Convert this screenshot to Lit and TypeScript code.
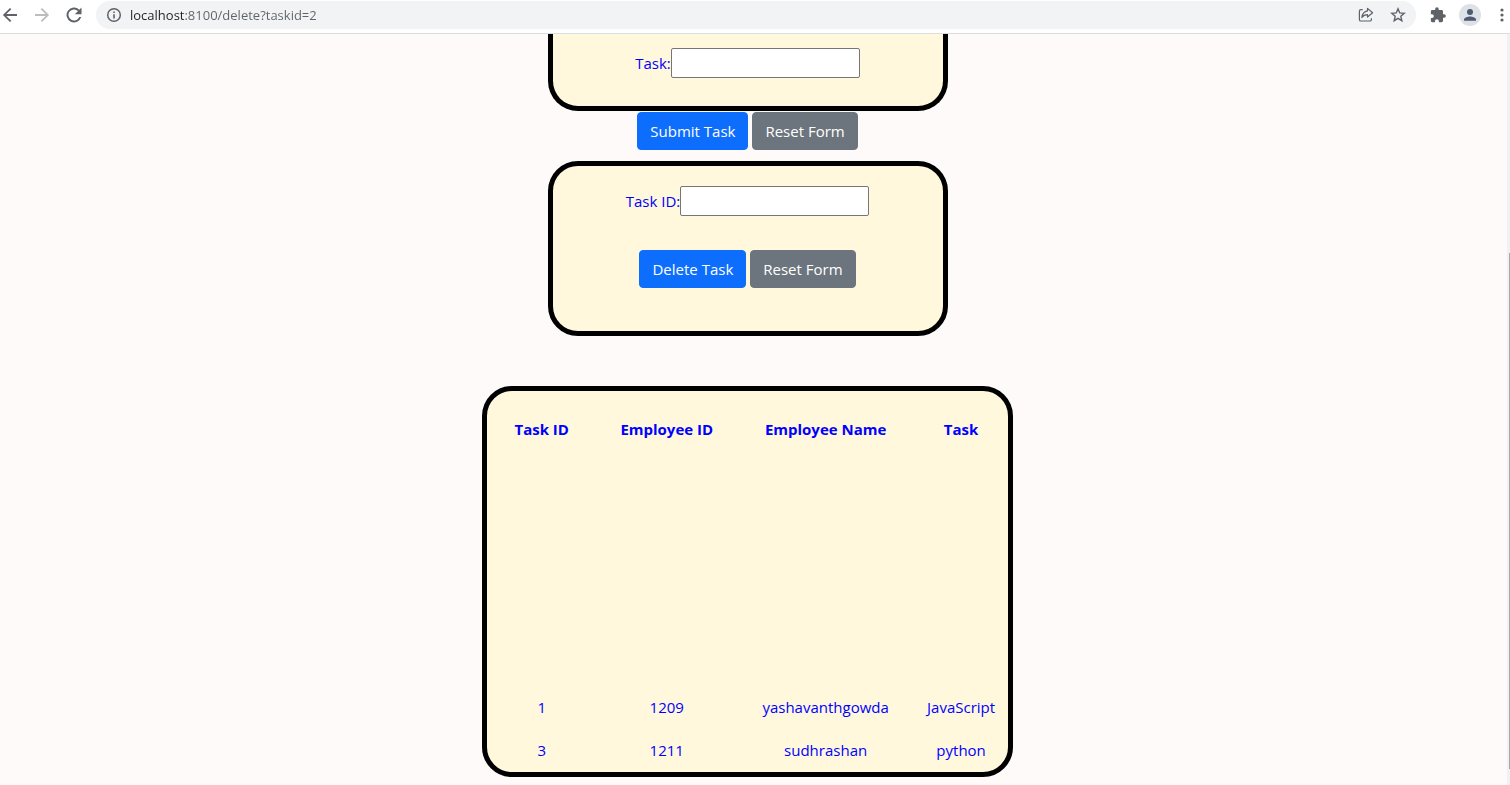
import { LitElement, html, css } from "lit";
import { customElement, property } from "lit/decorators.js";

interface Assignment {
  id: number;
  employeeId: number;
  name: string;
  task: string;
}

@customElement("browser-bar")
class BrowserBar extends LitElement {
  @property() url = "";

  static styles = css`
    :host {
      display: block;
      background: #fff;
      border-bottom: 1px solid #dadce0;
      color: #5f6368;
    }
    .bar {
      display: flex;
      align-items: center;
      height: 33px;
      padding-bottom: 3px;
      box-sizing: border-box;
    }
    .icon {
      display: flex;
      flex: none;
      padding: 0;
      border: 0;
      background: none;
      color: inherit;
      cursor: pointer;
    }
    .icon:disabled {
      color: #bbbdbf;
    }
    svg {
      display: block;
      fill: currentColor;
    }
    .nav {
      display: flex;
      gap: 12px;
      margin-right: 12px;
    }
    .address {
      display: flex;
      flex: 1;
      align-items: center;
      height: 28px;
      padding: 0 8px;
      border-radius: 14px;
      background: #f1f3f4;
    }
    .url {
      flex: 1;
      min-width: 0;
      height: 24px;
      margin: 0 12px 0 6px;
      padding: 0;
      border: 0;
      outline: 0;
      font: 13px/24px "Open Sans", "Noto Sans", sans-serif;
      color: #5f6368;
      background: linear-gradient(90deg, #202124 55px, #5f6368 55px);
      -webkit-background-clip: text;
      background-clip: text;
      -webkit-text-fill-color: transparent;
    }
    .actions {
      display: flex;
      gap: 12px;
    }
    .tools {
      display: flex;
      align-items: center;
      gap: 11px;
      margin-left: 12px;
    }
  `;

  render() {
    return html`
      <div class="bar">
        <div class="nav">
          <button class="icon" aria-label="Back">
            <svg width="20" height="20" viewBox="0 0 20 20"><path d="M17 9.100V10.900H6.400l4.900 4.900L10 17.100 2.900 10 10 2.900l1.300 1.300L6.400 9.100z" /></svg>
          </button>
          <button class="icon" aria-label="Forward" disabled>
            <svg width="20" height="20" viewBox="0 0 20 20"><path d="M3 9.100V10.900H13.600l-4.900 4.900L10 17.100 17.100 10 10 2.900 8.700 4.200l4.900 4.900z" /></svg>
          </button>
          <button class="icon" aria-label="Reload">
            <svg width="20" height="20" viewBox="0 0 24 24"><path d="M18.400 5.600A9 9 0 1 0 20.700 14.500H18.300A6.700 6.700 0 1 1 16.800 7.200L13 11H21V3z" /></svg>
          </button>
        </div>
        <div class="address">
          <svg width="20" height="20" viewBox="0 0 20 20" aria-hidden="true">
            <circle cx="10" cy="10" r="6.300" fill="none" stroke="currentColor" stroke-width="1.500" />
            <path d="M9.200 9.200h1.600V13.500H9.200zM9.200 6.500h1.600v1.600H9.200z" />
          </svg>
          <input class="url" type="text" aria-label="Address" spellcheck="false" .value=${this.url} />
          <div class="actions">
            <button class="icon" aria-label="Share">
              <svg width="20" height="20" viewBox="0 0 20 20">
                <path
                  d="M6.700 4.600H5a1.600 1.600 0 0 0-1.600 1.600v8.200A1.600 1.600 0 0 0 5 16h8.800a1.600 1.600 0 0 0 1.600-1.600v-1.200M11.500 3.400l5.100 4.300-5.100 4.300V9.700c-2.600 0-4.300.8-5.600 2.800.4-3.400 2.200-6.100 5.600-6.600z"
                  fill="none"
                  stroke="currentColor"
                  stroke-width="1.200"
                  stroke-linejoin="round"
                />
              </svg>
            </button>
            <button class="icon" aria-label="Bookmark">
              <svg width="20" height="20" viewBox="0 0 20 20">
                <path
                  d="M10 3.800l1.750 4.150 4.450.4-3.400 2.950 1.050 4.400L10 13.350 6.150 15.700l1.050-4.400-3.400-2.950 4.450-.4z"
                  fill="none"
                  stroke="currentColor"
                  stroke-width="1.400"
                />
              </svg>
            </button>
          </div>
        </div>
        <div class="tools">
          <button class="icon" aria-label="Extensions">
            <svg width="20" height="20" viewBox="-2 -2 28 28"><path d="M20.500 11H19V7c0-1.100-.9-2-2-2h-4V3.500a2.500 2.500 0 0 0-5 0V5H4a2 2 0 0 0-2 2v3.800h1.500a2.700 2.700 0 0 1 0 5.400H2V20c0 1.100.9 2 2 2h3.800v-1.500a2.700 2.700 0 0 1 5.400 0V22H17c1.100 0 2-.9 2-2v-4h1.500a2.500 2.500 0 0 0 0-5z" /></svg>
          </button>
          <button class="icon" aria-label="Profile">
            <svg width="22" height="22" viewBox="0 0 22 22">
              <circle cx="11" cy="11" r="11" fill="#dee1e6" />
              <circle cx="11" cy="8" r="3" fill="#4e5a70" />
              <path d="M5 16.800v-1.300c0-2 4-3 6-3s6 1 6 3v1.300z" fill="#4e5a70" />
            </svg>
          </button>
          <button class="icon" aria-label="Menu">
            <svg width="18" height="20" viewBox="0 0 18 20">
              <circle cx="10" cy="5" r="1.600" />
              <circle cx="10" cy="10" r="1.600" />
              <circle cx="10" cy="15" r="1.600" />
            </svg>
          </button>
        </div>
      </div>
    `;
  }
}

@customElement("app-root")
class AppRoot extends LitElement {
  private rows: Assignment[] = [
    { id: 1, employeeId: 1209, name: "yashavanthgowda", task: "JavaScript" },
    { id: 3, employeeId: 1211, name: "sudhrashan", task: "python" },
  ];

  static styles = css`
    :host {
      display: flex;
      flex-direction: column;
      min-height: 100vh;
      font: 15px/24px "Open Sans", "Noto Sans", sans-serif;
      color: #0000ff;
      background: #fffafa;
    }
    .view {
      display: flex;
      flex: 1;
    }
    main {
      display: flex;
      flex: 1;
      flex-direction: column;
      align-items: center;
      padding: 0 12px 8px 0;
    }
    .card {
      box-sizing: border-box;
      width: 100%;
      max-width: 400px;
      border: 5px solid #000;
      border-radius: 30px;
      background: #fff8dc;
    }
    .form {
      display: flex;
      flex-direction: column;
      align-items: center;
    }
    .entry {
      width: 100%;
      max-width: 400px;
    }
    .continued {
      padding: 14px 0 28px;
      border-top: 0;
      border-top-left-radius: 0;
      border-top-right-radius: 0;
    }
    .remove {
      gap: 34px;
      margin: 11px 0 50px;
      padding: 20px 0 43px;
    }
    .field {
      display: flex;
      align-items: center;
      justify-content: center;
    }
    .field input {
      box-sizing: border-box;
      width: 189px;
      height: 30px;
      padding: 1px 2px;
      border: 1px solid #767676;
      border-radius: 2px;
      background: #fff;
      font: inherit;
      color: #000;
    }
    .buttons {
      display: flex;
      justify-content: center;
      gap: 4px;
    }
    .entry .buttons {
      margin-top: 1px;
    }
    .btn {
      padding: 6px 12px;
      border: 1px solid #0d6efd;
      border-radius: 4px;
      background: #0d6efd;
      color: #fff;
      font: inherit;
      cursor: pointer;
    }
    .reset {
      border-color: #6c757d;
      background: #6c757d;
    }
    .list {
      max-width: 531px;
    }
    table {
      width: 100%;
      table-layout: fixed;
      border-collapse: collapse;
      text-align: center;
    }
    .c-id {
      width: 21%;
    }
    .c-employee {
      width: 27%;
    }
    .c-name {
      width: 34%;
    }
    .c-task {
      width: 18%;
    }
    th {
      height: 269px;
      padding: 26px 0 0;
      vertical-align: top;
      font-weight: 700;
    }
    td {
      padding: 9px 0 10px;
    }
    .scrollbar {
      display: flex;
      flex-direction: column;
      width: 3px;
      background: #f1f1f1;
    }
    .before {
      flex: 219;
    }
    .thumb {
      flex: 516;
      margin-left: 2px;
      background: #a8a8a8;
    }
    .after {
      flex: 16;
    }
  `;

  render() {
    return html`
      <browser-bar url="localhost:8100/delete?taskid=2"></browser-bar>
      <div class="view">
        <main>
          <form class="entry" @submit=${(e: Event) => e.preventDefault()}>
            <div class="card continued">
              <div class="field">
                <label for="task">Task:</label><input id="task" type="text" />
              </div>
            </div>
            <div class="buttons">
              <button class="btn" type="submit">Submit Task</button>
              <button class="btn reset" type="reset">Reset Form</button>
            </div>
          </form>
          <form class="card form remove" @submit=${(e: Event) => e.preventDefault()}>
            <div class="field">
              <label for="task-id">Task ID:</label><input id="task-id" type="text" />
            </div>
            <div class="buttons">
              <button class="btn" type="submit">Delete Task</button>
              <button class="btn reset" type="reset">Reset Form</button>
            </div>
          </form>
          <section class="card list">
            <table>
              <colgroup>
                <col class="c-id" />
                <col class="c-employee" />
                <col class="c-name" />
                <col class="c-task" />
              </colgroup>
              <thead>
                <tr>
                  <th scope="col">Task ID</th>
                  <th scope="col">Employee ID</th>
                  <th scope="col">Employee Name</th>
                  <th scope="col">Task</th>
                </tr>
              </thead>
              <tbody>
                ${this.rows.map(
                  (r) => html`<tr>
                    <td>${r.id}</td>
                    <td>${r.employeeId}</td>
                    <td>${r.name}</td>
                    <td>${r.task}</td>
                  </tr>`
                )}
              </tbody>
            </table>
          </section>
        </main>
        <div class="scrollbar" aria-hidden="true">
          <div class="before"></div>
          <div class="thumb"></div>
          <div class="after"></div>
        </div>
      </div>
    `;
  }
}
